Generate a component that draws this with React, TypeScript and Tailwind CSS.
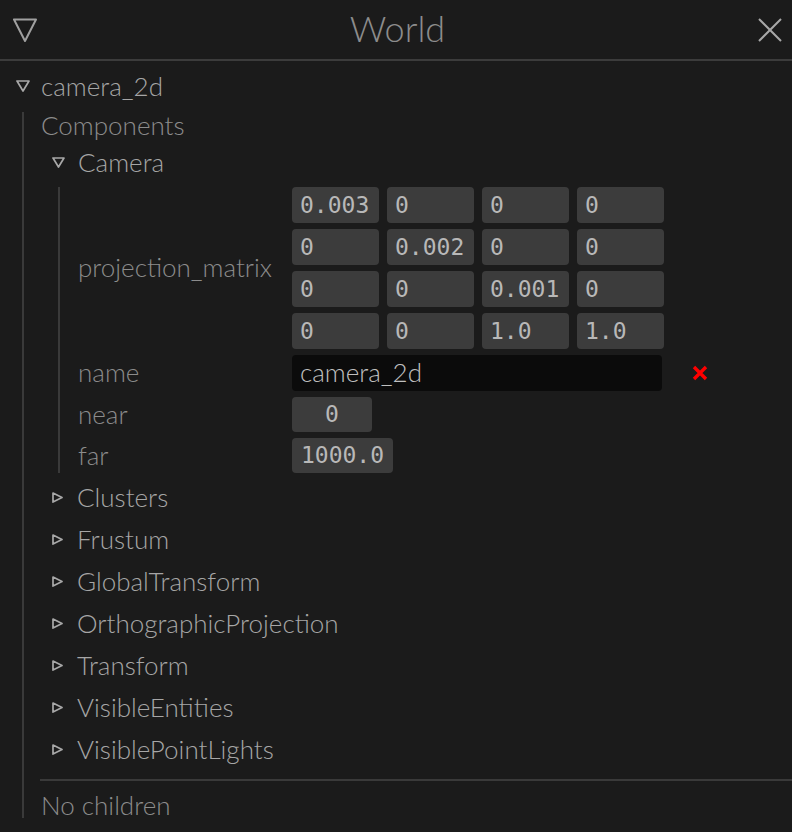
import React from 'react';

const HEAD = 'text-[#a6a6a6]';
const LABEL = 'text-[#8c8c8c]';

function TriDown({ w = 13, h = 11 }: { w?: number; h?: number }) {
  return (
    <svg width={w} height={h} viewBox={`0 0 ${w} ${h}`} className="shrink-0">
      <polygon points={`1,1 ${w - 1},1 ${w / 2},${h - 1}`} fill="none" stroke="#a8a8a8" strokeWidth="1.7" strokeLinejoin="round" />
    </svg>
  );
}

function TriRight() {
  return (
    <svg width={11} height={11} viewBox="0 0 11 11" className="shrink-0">
      <polygon points="1,1 10,5.5 1,10" fill="none" stroke="#a8a8a8" strokeWidth="1.7" strokeLinejoin="round" />
    </svg>
  );
}

function Cell({ v }: { v: string }) {
  return (
    <div className="w-[87px] h-[36px] rounded-[4px] bg-[#3c3c3c] flex items-center px-[8px] text-[#b8b8b8]">
      {v}
    </div>
  );
}

const matrix = [
  ['0.003', '0', '0', '0'],
  ['0', '0.002', '0', '0'],
  ['0', '0', '0.001', '0'],
  ['0', '0', '1.0', '1.0'],
];

const components = [
  'Clusters',
  'Frustum',
  'GlobalTransform',
  'OrthographicProjection',
  'Transform',
  'VisibleEntities',
  'VisiblePointLights',
];

export default function App() {
  const mono = '[font-family:"DejaVu_Sans_Mono",monospace] text-[23px] leading-none';
  return (
    <div className="w-[792px] h-[832px] bg-[#1b1b1b] overflow-hidden [font-family:Lato,'Open_Sans',sans-serif] font-light text-[26px] leading-none">
      {/* title bar */}
      <div className="h-[61px] border-b-2 border-[#3c3c3c] flex items-center px-[13px]">
        <svg width="24" height="24" viewBox="0 0 24 24" className="shrink-0">
          <polygon points="1,1.5 23,1.5 12,23" fill="none" stroke="#a0a0a0" strokeWidth="2" strokeLinejoin="round" />
        </svg>
        <div className="flex-1 text-center text-[36px] text-[#8c8c8c] pb-[3px]">World</div>
        <svg width="24" height="24" viewBox="0 0 24 24" className="shrink-0 mr-[-3px]">
          <path d="M1 1 L23 23 M23 1 L1 23" stroke="#a8a8a8" strokeWidth="2" />
        </svg>
      </div>

      {/* entity row */}
      <div className="mt-[5px] h-[40px] flex items-center pl-[16px] gap-[11px]">
        <TriDown w={14} h={12} />
        <span className={HEAD}>camera_2d</span>
      </div>

      <div className="mt-[6px] ml-[22px] border-l-2 border-[#3a3a3a] pl-[17px] h-[706px] flex flex-col">
        <div className={`h-[26px] flex items-center ${LABEL}`}>Components</div>

        <div className="h-[42px] flex items-center pl-[11px] gap-[13px] mt-[3px]">
          <TriDown />
          <span className={HEAD}>Camera</span>
        </div>

        {/* Camera body */}
        <div className="mt-[4px] ml-[17px] border-l-2 border-[#3a3a3a] pl-[18px] grid grid-cols-[214px_auto] gap-y-[6px] items-center">
          <div className={`${LABEL} pb-[2px]`}>projection_matrix</div>
          <div className={`flex flex-col gap-[6px] ${mono}`}>
            {matrix.map((row, i) => (
              <div key={i} className="flex gap-[8px]">
                {row.map((v, j) => (
                  <Cell key={j} v={v} />
                ))}
              </div>
            ))}
          </div>

          <div className={`${LABEL} pb-[2px]`}>name</div>
          <div className="flex items-center">
            <div className="w-[370px] h-[36px] rounded-[4px] bg-[#0b0b0b] flex items-center px-[8px] pb-[2px] text-[#c0c0c0]">
              camera_2d
            </div>
            <svg width="16" height="16" viewBox="0 0 16 16" className="ml-[30px]">
              <path d="M2 2 L14 14 M14 2 L2 14" stroke="#ff0000" strokeWidth="3.4" />
            </svg>
          </div>

          <div className={`${LABEL} pb-[2px]`}>near</div>
          <div className={`w-[80px] h-[35px] rounded-[4px] bg-[#3c3c3c] flex items-center justify-center text-[#b8b8b8] ${mono}`}>0</div>

          <div className={`${LABEL} pb-[2px]`}>far</div>
          <div className={`w-[101px] h-[35px] rounded-[4px] bg-[#3c3c3c] flex items-center justify-center text-[#b8b8b8] ${mono}`}>1000.0</div>
        </div>

        <div className="mt-[3px] flex flex-col">
          {components.map((c) => (
            <div key={c} className="h-[42px] flex items-center pl-[11px] gap-[14px]">
              <TriRight />
              <span className={HEAD}>{c}</span>
            </div>
          ))}
        </div>

        <div className="mt-[9px] h-[2px] bg-[#3a3a3a] mr-[-24px] ml-[-1px]" />
        <div className={`pt-[12px] h-[36px] leading-[24px] ${LABEL}`}>No children</div>
      </div>
    </div>
  );
}
